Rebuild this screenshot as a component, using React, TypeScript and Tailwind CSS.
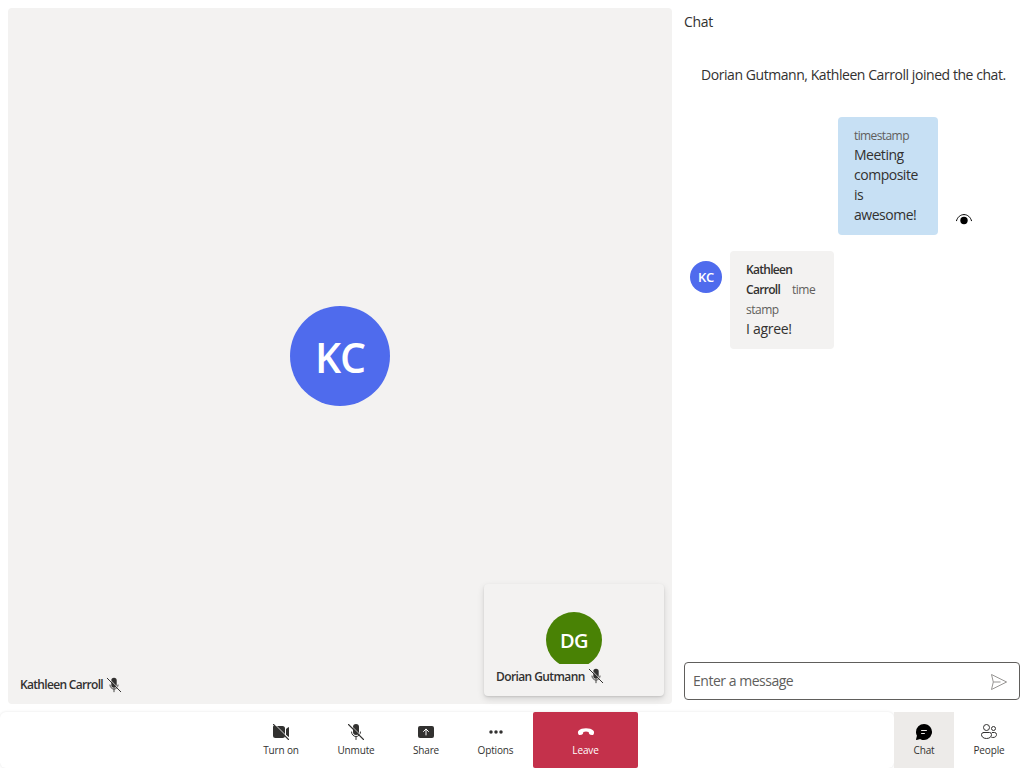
import React from "react";

function MicOff({ className = "", gap = "stroke-white" }: { className?: string; gap?: string }) {
  return (
    <svg viewBox="0 0 20 20" className={className} fill="none" stroke="currentColor">
      <rect x="7" y="2" width="6" height="11" rx="3" fill="currentColor" stroke="none" />
      <path d="M5.500 10a4.500 4.500 0 0 0 9 0M10 14.500v3" strokeLinecap="round" />
      <path d="m3.300 1.900 15 15" className={gap} strokeWidth=".8" />
      <path d="m2.500 2.500 15 15" strokeWidth="1.100" strokeLinecap="round" />
    </svg>
  );
}

function VideoOff() {
  return (
    <svg viewBox="0 0 20 20" className="size-5" fill="currentColor">
      <path d="M2.500 4H11.500A2.500 2.500 0 0 1 14 6.500v7A2.500 2.500 0 0 1 11.500 16h-7A2.500 2.500 0 0 1 2 13.500V4.500ZM15 6.900l2.200-1.700a.5.5 0 0 1 .8.400v8.800c0 .3-.2.500-.4.500L15 12.800Z" />
      <path d="m3.300 1.900 15 15" className="stroke-white" strokeWidth="1" />
      <path d="m2.500 2.500 15 15" stroke="currentColor" strokeWidth="1.100" strokeLinecap="round" />
    </svg>
  );
}

function ShareIcon() {
  return (
    <svg viewBox="0 0 20 20" className="size-5">
      <rect x="2" y="4" width="16" height="12" rx="2" fill="currentColor" />
      <path d="M10 13V7.200M7.500 9.500 10 7l2.500 2.500" fill="none" stroke="white" strokeLinecap="round" strokeLinejoin="round" />
    </svg>
  );
}

function MoreIcon() {
  return (
    <svg viewBox="0 0 20 20" className="size-5" fill="currentColor">
      <circle cx="5" cy="10" r="1.750" />
      <circle cx="10" cy="10" r="1.750" />
      <circle cx="15" cy="10" r="1.750" />
    </svg>
  );
}

function EndCallIcon() {
  return (
    <svg viewBox="0 0 20 20" className="size-5" fill="currentColor">
      <path d="m18 10.900-.2.900c-.1.800-.9 1.300-1.700 1.200l-1.700-.3c-.7-.1-1.200-.6-1.400-1.300l-.4-1.500A7 7 0 0 0 10 9.400a7 7 0 0 0-2.600.500l-.4 1.500c-.2.700-.7 1.200-1.400 1.300l-1.700.3c-.8.100-1.500-.4-1.700-1.200L2 10.900c-.2-1 .1-1.900.8-2.500C4.300 7 6.800 6.200 10 6.200S15.700 7 17.200 8.400c.7.600 1 1.500.8 2.500Z" />
    </svg>
  );
}

function ChatIcon() {
  return (
    <svg viewBox="0 0 20 20" className="size-5 text-black" fill="currentColor">
      <path d="M10 2a8 8 0 1 1-3.610 15.140l-.12-.07-3.650.92a.5.5 0 0 1-.62-.45v-.08l.01-.08.92-3.640-.07-.12a7.950 7.950 0 0 1-.83-2.900l-.02-.37L2 10a8 8 0 0 1 8-8zm.5 9h-3l-.09.01a.5.5 0 0 0 0 .98l.09.01h3l.09-.01a.5.5 0 0 0 0-.98L10.500 11zm2-3h-5l-.09.01a.5.5 0 0 0 0 .98L7.500 9h5l.09-.01a.5.5 0 0 0 0-.98L12.500 8z" />
    </svg>
  );
}

function PeopleIcon() {
  return (
    <svg viewBox="0 0 20 20" className="size-5" fill="none" stroke="currentColor">
      <circle cx="7.500" cy="5.500" r="3" />
      <circle cx="14.500" cy="6.500" r="2" />
      <path d="M4.500 10.500h6A2 2 0 0 1 12.500 12.500c0 2-1.500 4-5 4S2.500 14.500 2.500 12.500A2 2 0 0 1 4.500 10.500ZM13.200 10.500H15.500a2 2 0 0 1 2 2c0 1.500-1 3-3.500 3-.5 0-.9-.1-1.300-.2" strokeLinecap="round" />
    </svg>
  );
}

function SeenIcon() {
  return (
    <svg viewBox="0 0 16 12" className="h-3 w-4 text-black">
      <path d="M.5 6.700C1.500 3 4.500.6 8 .6S14.500 3 15.500 6.700" fill="none" stroke="currentColor" strokeLinecap="round" />
      <circle cx="8" cy="6.500" r="3.700" fill="currentColor" />
    </svg>
  );
}

function SendIcon() {
  return (
    <svg viewBox="0 0 20 20" className="mt-0.5 size-5 text-[#979593]" fill="none" stroke="currentColor" strokeLinejoin="round">
      <path d="M2.500 2.500 17.600 10 2.500 17.500 4.300 10ZM4.300 10H11.500" />
    </svg>
  );
}

function BarButton({ className, icon, label }: { className: string; icon: React.ReactNode; label: string }) {
  return (
    <button className={`flex h-14 flex-col items-center pt-2.5 ${className}`}>
      {icon}
      <span className="text-[10px] leading-[17px] tracking-[-0.15px] whitespace-nowrap">{label}</span>
    </button>
  );
}

export default function App() {
  return (
    <div className="flex h-screen w-screen flex-col overflow-hidden bg-white font-['Open_Sans',sans-serif] text-[#323130]">
      <div className="flex h-[712px]">
        <main className="relative m-2 flex h-[696px] w-[664px] shrink-0 items-center justify-center rounded bg-[#f3f2f1]">
          <div className="flex size-[100px] items-center justify-center rounded-full bg-[#4f6bed] pt-1 text-[41px] font-semibold tracking-[-1.2px] text-white">KC</div>
          <div className="absolute bottom-2 left-3 flex items-center gap-0.5 text-xs leading-[22px] font-semibold tracking-[-0.68px]">
            <span className="whitespace-nowrap">Kathleen Carroll</span>
            <MicOff className="size-[18px]" gap="stroke-[#f3f2f1]" />
          </div>
          <section className="absolute right-2 bottom-2 flex h-28 w-[180px] flex-col rounded bg-[#f3f2f1] shadow-[0_3px_7px_rgba(0,0,0,0.13),0_1px_2px_rgba(0,0,0,0.11)]">
            <div className="flex h-20 justify-center overflow-hidden pt-7">
              <div className="flex size-14 shrink-0 items-center justify-center rounded-full bg-[#498205] pt-0.5 text-xl font-[550] tracking-[-0.6px] text-white">DG</div>
            </div>
            <div className="flex items-center gap-0.5 pl-3 text-xs leading-[26px] font-semibold tracking-[-0.6px]">
              <span className="whitespace-nowrap">Dorian Gutmann</span>
              <MicOff className="mb-0.5 size-[18px]" gap="stroke-[#f3f2f1]" />
            </div>
          </section>
        </main>
        <aside className="flex w-[344px] flex-col pl-1">
          <h1 className="pt-3 text-sm leading-5 tracking-[-0.3px]">Chat</h1>
          <p className="mt-[33px] pl-[17px] text-sm leading-5 tracking-[-0.44px] whitespace-nowrap">Dorian Gutmann, Kathleen Carroll joined the chat.</p>
          <div className="mt-8 ml-[154px] flex items-end">
            <div className="h-[118px] w-[100px] rounded bg-[#c7e0f4] px-4 pt-2.5 text-sm leading-5 tracking-[-0.48px]">
              <div className="text-xs leading-[18px] tracking-[-0.6px] text-[#605e5c]">timestamp</div>
              <p>Meeting<br />composite<br />is<br />awesome!</p>
            </div>
            <div className="mb-[9px] ml-[18px]"><SeenIcon /></div>
          </div>
          <div className="mt-4 flex items-start pl-1.5">
            <div className="mt-2.5 mr-2 flex size-8 items-center justify-center rounded-full bg-[#4f6bed] pt-px text-[13px] font-[550] tracking-[-0.2px] text-white">KC</div>
            <div className="h-[98px] w-[104px] rounded bg-[#f3f2f1] px-4 pt-[9px] text-xs leading-5 tracking-[-0.5px]">
              <div className="font-semibold tracking-[-0.7px]">Kathleen</div>
              <div className="whitespace-nowrap"><span className="mr-3 font-semibold tracking-[-0.7px]">Carroll</span><span className="text-[#605e5c]">time</span></div>
              <div className="text-[#605e5c]">stamp</div>
              <p className="-mt-px text-sm leading-5 tracking-[-0.3px]">I agree!</p>
            </div>
          </div>
          <div className="mt-auto mr-1 mb-3 flex h-[38px] w-[336px] items-center justify-between rounded border border-[#605e5c] pr-2.5 pl-2 text-sm tracking-[-0.48px] text-[#605e5c]">
            <span>Enter a message</span>
            <SendIcon />
          </div>
        </aside>
      </div>
      <footer className="flex h-14">
        <nav className="flex w-[894px] rounded-md pl-[244px] shadow-[0_0_3px_rgba(0,0,0,0.11)]">
          <BarButton className="w-[74px]" icon={<VideoOff />} label="Turn on" />
          <BarButton className="w-[76px]" icon={<MicOff className="size-5" />} label="Unmute" />
          <BarButton className="w-16" icon={<ShareIcon />} label="Share" />
          <BarButton className="w-[75px]" icon={<MoreIcon />} label="Options" />
          <BarButton className="w-[105px] rounded-xs bg-[#c4314b] text-white" icon={<EndCallIcon />} label="Leave" />
        </nav>
        <BarButton className="w-[60px] bg-[#edebe9]" icon={<ChatIcon />} label="Chat" />
        <BarButton className="w-[70px]" icon={<PeopleIcon />} label="People" />
      </footer>
    </div>
  );
}
